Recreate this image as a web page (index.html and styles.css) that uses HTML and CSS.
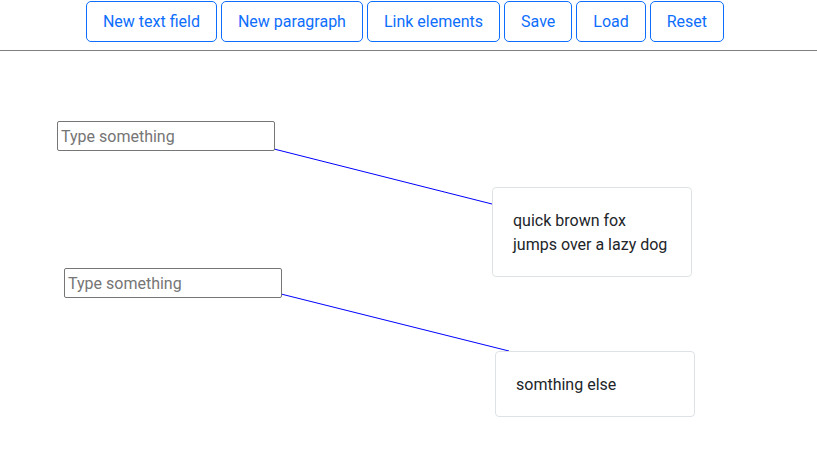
FILE: index.html
```html
<!DOCTYPE html>
<html>
<head>
<meta charset="utf-8">
<link rel="stylesheet" href="styles.css">
</head>
<body>
<div class="toolbar">
  <button class="btn">New text field</button>
  <button class="btn">New paragraph</button>
  <button class="btn">Link elements</button>
  <button class="btn">Save</button>
  <button class="btn">Load</button>
  <button class="btn">Reset</button>
</div>
<div class="canvas">
  <svg class="links" width="817" height="423" viewBox="0 51 817 423">
    <line x1="274" y1="149" x2="492" y2="204" />
    <line x1="281" y1="294" x2="509" y2="351" />
  </svg>
  <input class="node field field-1" type="text" placeholder="Type something">
  <input class="node field field-2" type="text" placeholder="Type something">
  <div class="node para para-1">quick brown fox<br>jumps over a lazy dog</div>
  <div class="node para para-2">somthing else</div>
</div>
</body>
</html>
```

FILE: styles.css
```css
html, body {
  margin: 0;
  padding: 0;
  background: #fff;
  font-family: Roboto, "Liberation Sans", sans-serif;
}

.toolbar {
  display: flex;
  justify-content: center;
  gap: 4px;
  padding: 0 7px 8px 0;
  border-bottom: 1px solid #808080;
  height: 42px;
}

.btn {
  margin-top: 1px;
  box-sizing: border-box;
  height: 41px;
  padding: 0 16px;
  font-family: Roboto, "Liberation Sans", sans-serif;
  font-size: 16px;
  line-height: 24px;
  color: #0d6efd;
  background: #fff;
  border: 1px solid #0d6efd;
  border-radius: 5px;
}

.canvas {
  position: relative;
  height: 422px;
}

.links {
  position: absolute;
  left: 0;
  top: 0;
}

.links line {
  stroke: #0000ff;
  stroke-width: 1;
}

.node {
  position: absolute;
  box-sizing: border-box;
}

.field {
  width: 218px;
  height: 30px;
  padding: 0 3px;
  border: 1px solid #767676;
  border-radius: 2px;
  font-family: Roboto, "Liberation Sans", sans-serif;
  font-size: 16px;
  color: #000;
  background: #fff;
}

.field::placeholder {
  color: #757575;
}

.field-1 { left: 57px; top: 70px; }
.field-2 { left: 64px; top: 217px; }

.para {
  width: 200px;
  padding: 21px 20px 19px;
  border: 1px solid #dee2e6;
  border-radius: 4px;
  background: #fff;
  color: #212529;
  font-size: 16px;
  line-height: 24px;
}

.para-1 { left: 492px; top: 136px; }
.para-2 { left: 495px; top: 300px; }
```
